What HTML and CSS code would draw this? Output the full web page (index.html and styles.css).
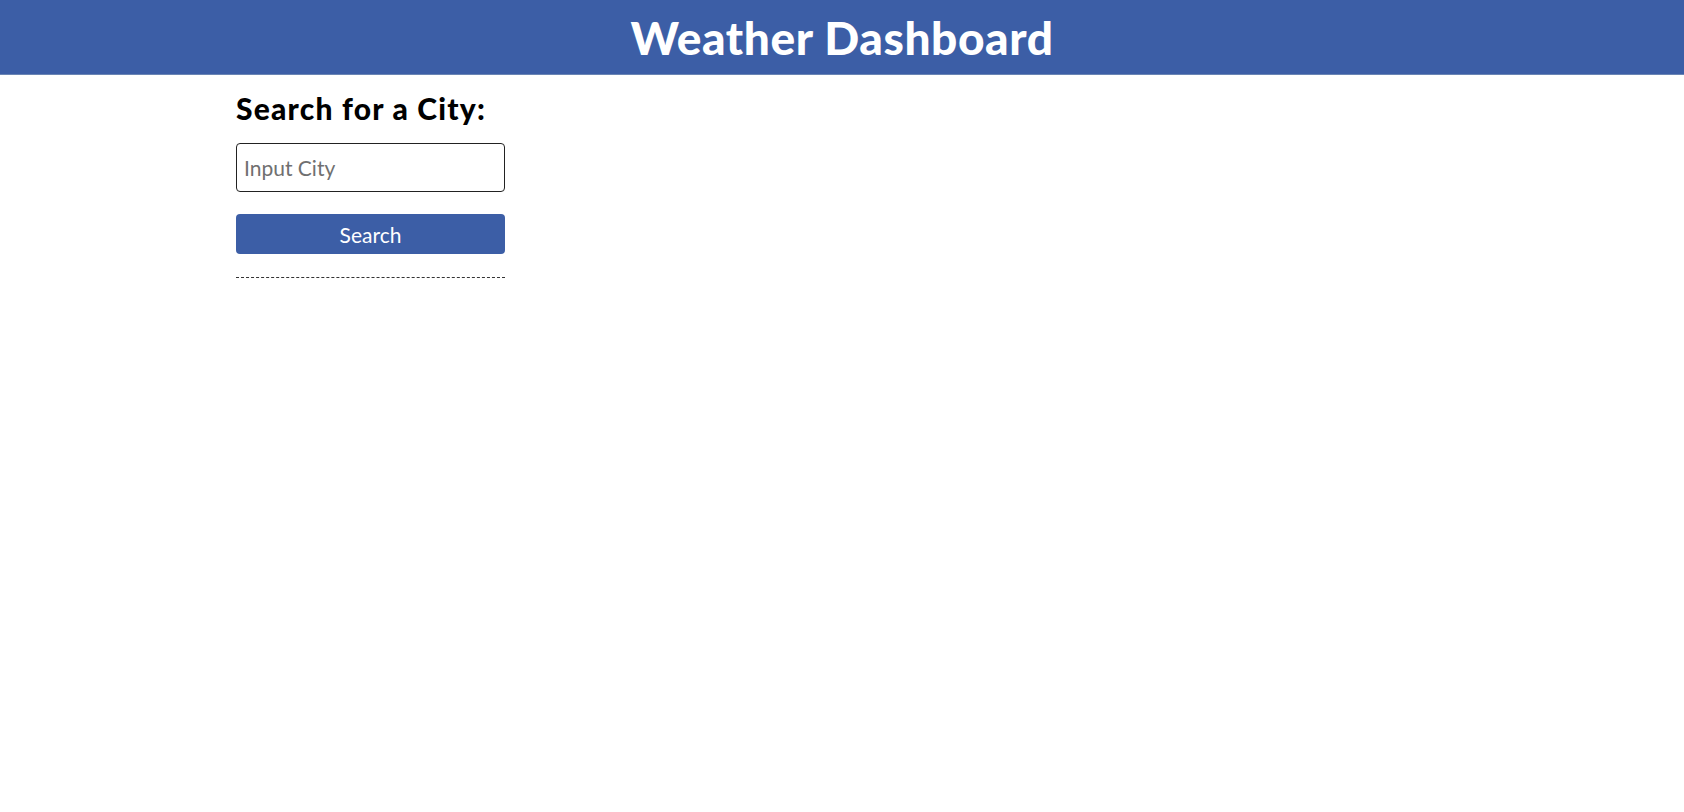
FILE: index.html
```html
<!DOCTYPE html>
<html lang="en">
<head>
<meta charset="utf-8">
<title>Weather Dashboard</title>
<link rel="stylesheet" href="styles.css">
</head>
<body>
<header class="site-header">
  <h1 class="site-title">Weather Dashboard</h1>
</header>
<main class="page">
  <aside class="search-panel">
    <h2 class="search-title">Search for a City:</h2>
    <input class="city-input" type="text" placeholder="Input City">
    <button class="search-btn" type="button">Search</button>
    <hr class="divider">
  </aside>
</main>
</body>
</html>
```
FILE: styles.css
```css
* { box-sizing: border-box; }
html, body { margin: 0; padding: 0; background: #fff; }
body { font-family: "Lato", "Open Sans", sans-serif; color: #000; }

.site-header {
  background: #3c5ea6;
  height: 75px;
  display: flex;
  align-items: center;
  justify-content: center;
  border-bottom: 1px solid #6a85b4;
}
.site-title {
  margin: 0;
  color: #fff;
  font-size: 46px;
  font-weight: 900;
  letter-spacing: 0.6px;
}

.page {
  padding: 0 0 0 236px;
}
.search-panel {
  width: 269px;
  display: flex;
  flex-direction: column;
  padding-top: 16px;
}
.search-title {
  margin: 0 0 18px;
  font-size: 30px;
  font-weight: 900;
  line-height: 34px;
  letter-spacing: 1.2px;
  white-space: nowrap;
}
.city-input {
  height: 49px;
  border: 1px solid #222;
  border-radius: 4px;
  padding: 0 7px;
  font-family: inherit;
  font-size: 21px;
  color: #333;
  outline: none;
}
.city-input::placeholder { color: #707070; }
.search-btn {
  margin-top: 22px;
  height: 40px;
  border: none;
  border-radius: 4px;
  background: #3c5ea6;
  color: #fff;
  font-family: inherit;
  font-size: 21px;
  cursor: pointer;
}
.divider {
  margin: 23px 0 0;
  border: none;
  border-top: 1px dashed #333;
  height: 0;
}
```
